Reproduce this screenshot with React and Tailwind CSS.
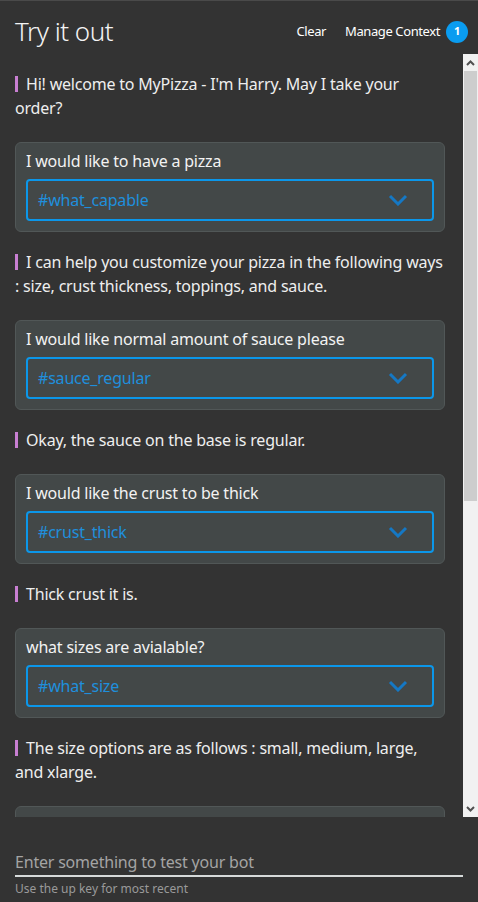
import React from 'react';

const FONT = { fontFamily: '"Noto Sans", "Open Sans", sans-serif' };

const conversation = [
  {
    bot: ["Hi! welcome to MyPizza - I'm Harry. May I take your", 'order?'],
    user: 'I would like to have a pizza',
    intent: '#what_capable',
  },
  {
    bot: ['I can help you customize your pizza in the following ways', ': size, crust thickness, toppings, and sauce.'],
    user: 'I would like normal amount of sauce please',
    intent: '#sauce_regular',
  },
  {
    bot: ['Okay, the sauce on the base is regular.'],
    user: 'I would like the crust to be thick',
    intent: '#crust_thick',
  },
  {
    bot: ['Thick crust it is.'],
    user: 'what sizes are avialable?',
    intent: '#what_size',
  },
  {
    bot: ['The size options are as follows : small, medium, large,', 'and xlarge.'],
    user: 'I would like the large size',
    intent: '#size_large',
  },
];

const Chevron = () => (
  <svg width="20" height="12" viewBox="0 0 20 12" fill="none">
    <path d="M2 2l8 8 8-8" stroke="#1578c4" strokeWidth="3" />
  </svg>
);

const BotMessage = ({ lines }) => (
  <p className="text-[16px] leading-6 tracking-[-0.2px] text-[#eeeeee] pt-[18px] pb-[22px] whitespace-nowrap">
    <span className="inline-block w-[3px] h-4 bg-[#c87fd2] mr-2 align-[-2px]"></span>
    {lines.map((l, i) => (
      <React.Fragment key={i}>
        {i > 0 && <br />}
        {l}
      </React.Fragment>
    ))}
  </p>
);

const UserCard = ({ text, intent }) => (
  <div className="rounded-md border border-[#515757] bg-[#434848] px-[10px] pt-[6px] pb-[10px]">
    <p className="text-[16px] leading-6 tracking-[-0.2px] text-[#f2f2f2] whitespace-nowrap">{text}</p>
    <div className="mt-[6px] h-[42px] rounded-[4px] border-2 border-[#0b97ea] flex items-center justify-between pl-[10px] pr-[24px]">
      <span className="text-[16px] tracking-[-0.2px] text-[#1f8fdc]">{intent}</span>
      <Chevron />
    </div>
  </div>
);

export default function App() {
  return (
    <div className="w-[478px] h-[902px] bg-[#333333] border-t border-[#4a4a4a] flex flex-col overflow-hidden" style={FONT}>
      {/* Header */}
      <div className="h-[53px] flex items-center justify-between pl-[15px] pr-[10px] pt-[8px]">
        <h1 className="text-[26px] font-light text-[#f4f4f4] tracking-[-0.5px]">Try it out</h1>
        <div className="flex items-center text-[13px] tracking-[-0.4px] text-white">
          <button className="mr-[19px]">Clear</button>
          <button className="mr-[6px]">Manage Context</button>
          <span className="w-[22px] h-[22px] rounded-full bg-[#0a9cf0] flex items-center justify-center text-[11px] font-bold text-white">1</span>
        </div>
      </div>

      {/* Conversation + scrollbar */}
      <div className="h-[763px] flex">
        <div className="flex-1 overflow-hidden pl-[15px] pr-[18px]">
          {conversation.map((c, i) => (
            <div key={i}>
              <BotMessage lines={c.bot} />
              <UserCard text={c.user} intent={c.intent} />
            </div>
          ))}
        </div>
        <div className="w-[15px] bg-[#f1f1f1] flex flex-col">
          <div className="h-[17px] flex items-center justify-center">
            <svg width="9" height="6" viewBox="0 0 9 6"><path d="M1 5l3.5-3.5L8 5" stroke="#505050" strokeWidth="2" fill="none" /></svg>
          </div>
          <div className="h-[430px] mx-[1px] bg-[#cdcdcd]"></div>
          <div className="flex-1"></div>
          <div className="h-[17px] flex items-center justify-center">
            <svg width="9" height="6" viewBox="0 0 9 6"><path d="M1 1l3.5 3.5L8 1" stroke="#505050" strokeWidth="2" fill="none" /></svg>
          </div>
        </div>
      </div>

      {/* Input */}
      <div className="flex-1 pl-[15px] pr-[15px] pt-[32px]">
        <input
          className="w-full h-[28px] bg-transparent text-[16px] tracking-[-0.2px] text-white placeholder:text-[#a4a4a4] outline-none border-b-2 border-[#d6dada]"
          placeholder="Enter something to test your bot"
        />
        <p className="text-[12px] text-[#9a9a9a] mt-[3px]">Use the up key for most recent</p>
      </div>
    </div>
  );
}
